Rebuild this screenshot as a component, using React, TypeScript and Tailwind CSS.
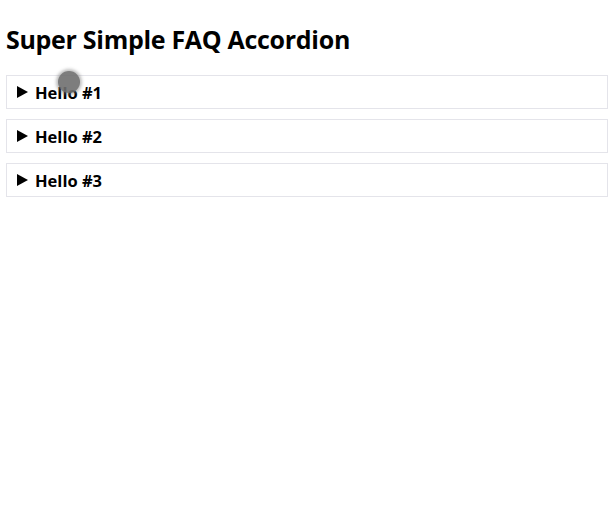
const items = ["Hello #1", "Hello #2", "Hello #3"];

export default function App() {
  return (
    <div className="relative min-h-[517px] bg-white px-[6px] pt-[22px] text-black font-['Open_Sans',sans-serif]">
      <h1 className="text-[25px] font-bold leading-[34px] tracking-[-0.3px] mb-[19px]">
        Super Simple FAQ Accordion
      </h1>
      <div className="flex flex-col gap-[10px]">
        {items.map((q) => (
          <details key={q} className="border border-[#e4e4ea]">
            <summary className="flex list-none items-center gap-[7px] cursor-pointer px-[10px] pt-[7px] pb-[5px] text-[16.5px] font-bold leading-[20px] [&::-webkit-details-marker]:hidden">
              <svg width="11" height="12" viewBox="0 0 11 12" className="shrink-0 -mt-[3px]">
                <path d="M0 0 L11 6 L0 12 Z" fill="black" />
              </svg>
              {q}
            </summary>
          </details>
        ))}
      </div>
      <div className="absolute left-[58px] top-[71px] h-[22px] w-[22px] rounded-full bg-[#6f6f6f] opacity-90 shadow-[0_0_3px_2px_rgba(120,120,120,0.5)]" />
    </div>
  );
}
